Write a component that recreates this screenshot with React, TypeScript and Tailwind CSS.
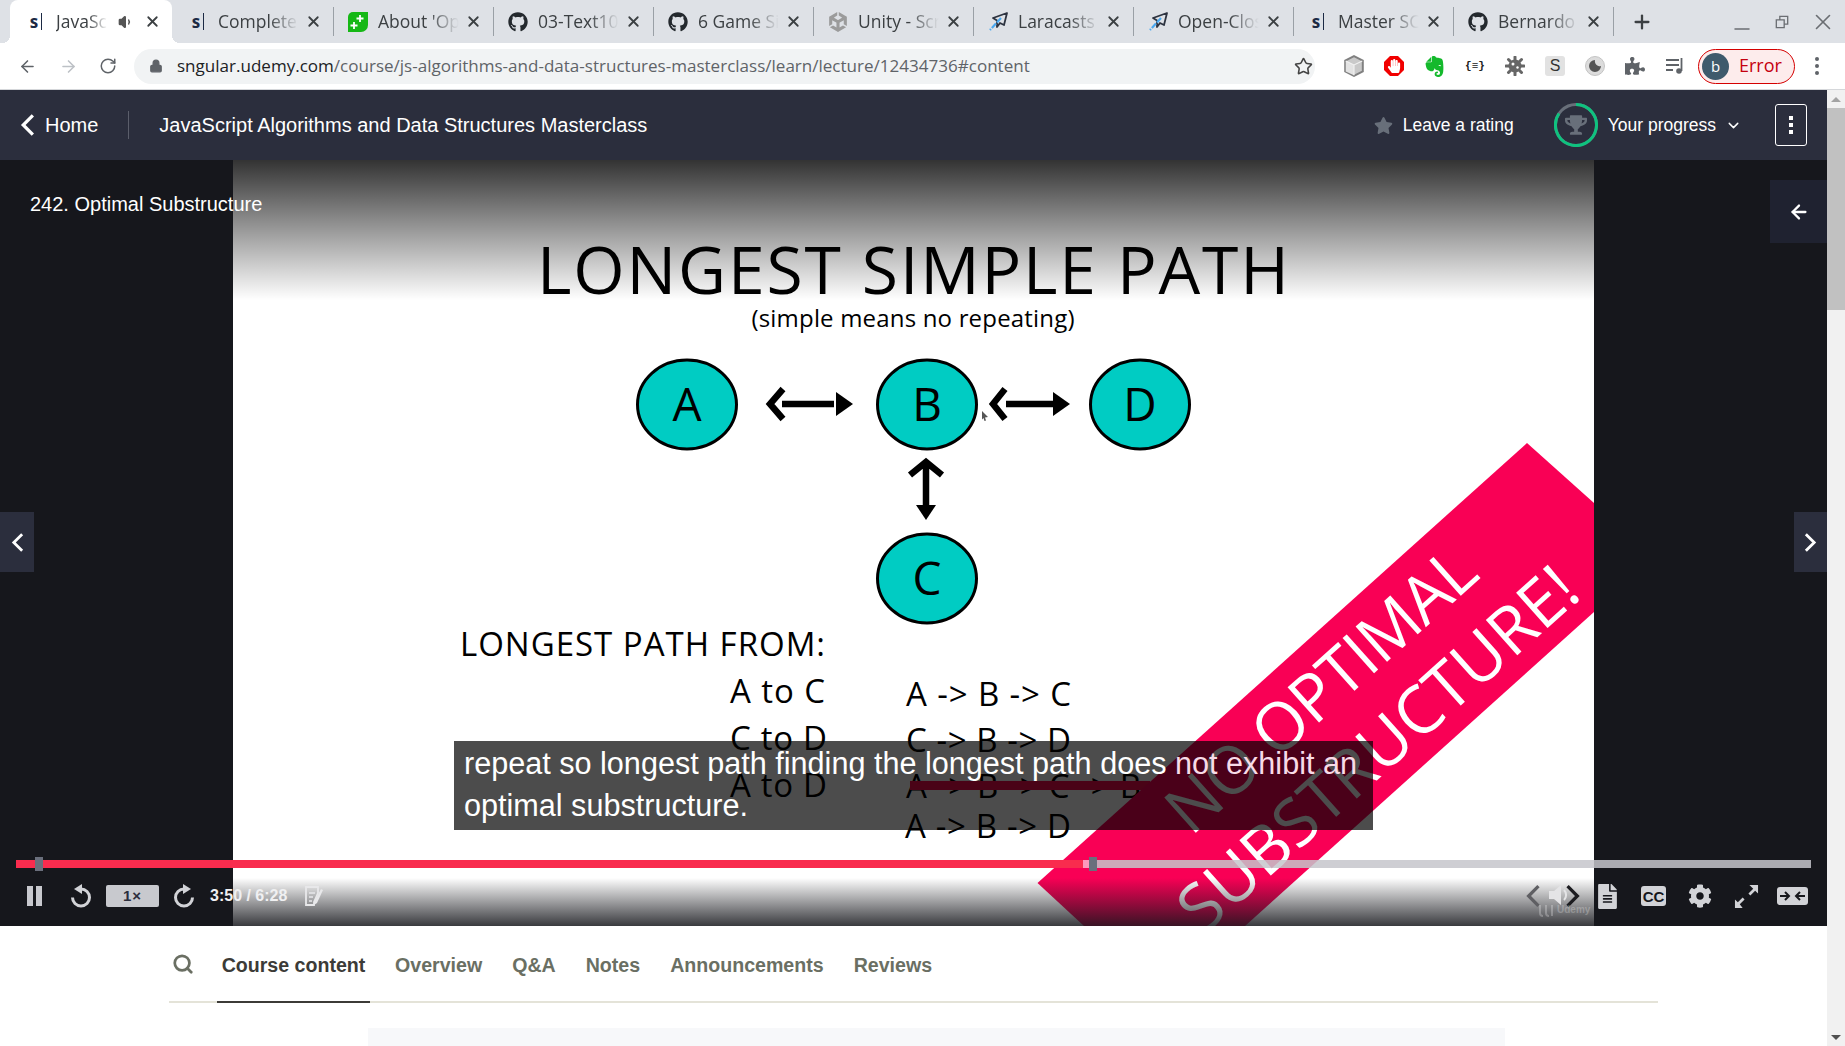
import React from 'react';
import { FaGithub, FaHandPaper, FaPuzzlePiece, FaStar, FaTrophy, FaFileAlt, FaCog } from 'react-icons/fa';
import { SiEvernote, SiUnity } from 'react-icons/si';
import { ArrowLeft, ArrowRight, ChevronDown, Lock, Minus, Plus, RotateCw, Search, Star, Volume1, X } from 'lucide-react';

type Favicon = 'udemy' | 'github' | 'plus' | 'unity' | 'plane';

const tabs: { title: string; icon: Favicon; active?: boolean }[] = [
  { title: 'JavaScript', icon: 'udemy', active: true },
  { title: 'Complete', icon: 'udemy' },
  { title: "About 'Open", icon: 'plus' },
  { title: '03-Text10', icon: 'github' },
  { title: '6 Game Sites', icon: 'github' },
  { title: 'Unity - Scr', icon: 'unity' },
  { title: 'Laracasts', icon: 'plane' },
  { title: 'Open-Clos', icon: 'plane' },
  { title: 'Master SC', icon: 'udemy' },
  { title: 'Bernardo', icon: 'github' },
];

function Chevron({ right, className }: { right?: boolean; className: string }) {
  return (
    <svg viewBox="0 0 14 22" className={className}>
      <path d={right ? 'M2 2l9 9-9 9' : 'M12 2l-9 9 9 9'} fill="none" stroke="currentColor" strokeWidth="3" />
    </svg>
  );
}

function TabIcon({ icon }: { icon: Favicon }) {
  if (icon === 'udemy') {
    return (
      <span className="flex h-5 w-5 shrink-0 items-center justify-center gap-[3px] text-[17px] font-bold text-[#1c2a44]">
        <span>s</span>
        <span className="h-[17px] w-px bg-[#1c2a44]" />
      </span>
    );
  }
  if (icon === 'github') return <FaGithub className="h-5 w-5 shrink-0 text-[#24292e]" />;
  if (icon === 'unity') return <SiUnity className="h-5 w-5 shrink-0 text-[#9b9b9b]" />;
  if (icon === 'plus') {
    return (
      <svg viewBox="0 0 20 20" className="h-5 w-5 shrink-0">
        <path d="M5 0h15v13a7 7 0 0 1-7 7H0V5a5 5 0 0 1 5-5z" fill="#16b816" />
        <path d="M12 3v7M8.500 6.500h7M6 10v7M2.500 13.500h7" stroke="#fff" strokeWidth="1.800" />
      </svg>
    );
  }
  return (
    <svg viewBox="0 0 20 20" className="h-5 w-5 shrink-0">
      <path d="M19 1L5 6l4 2.500L9 15l3-4 4 2z" fill="none" stroke="#2d3340" strokeWidth="1.800" strokeLinejoin="round" />
      <path d="M13 6L2 18" stroke="#4aa8f0" strokeWidth="2.200" strokeDasharray="6 1.500" />
    </svg>
  );
}

function TabStrip() {
  return (
    <div className="flex h-[43px] shrink-0 items-stretch bg-[#dee1e6] pl-[10px]">
      {tabs.map(tab => (
        <div
          key={tab.title}
          className={
            tab.active
              ? 'relative mr-[2px] flex w-[162px] items-center rounded-t-lg bg-white pl-[16px] pr-[10px]'
              : 'flex w-[160px] items-center pl-[14px]'
          }
        >
          {tab.active && (
            <>
              <span className="absolute bottom-0 left-[-8px] h-2 w-2 bg-[radial-gradient(circle_at_0_0,transparent_8px,white_8px)]" />
              <span className="absolute bottom-0 right-[-8px] h-2 w-2 bg-[radial-gradient(circle_at_100%_0,transparent_8px,white_8px)]" />
            </>
          )}
          <TabIcon icon={tab.icon} />
          <span className="ml-[10px] min-w-0 flex-1 overflow-hidden whitespace-nowrap text-[17.500px] text-[#3c4043] [mask-image:linear-gradient(to_right,black_60%,transparent_95%)]">
            {tab.title}
          </span>
          {tab.active && <Volume1 className="mx-[8px] h-[16px] w-[16px] shrink-0 fill-[#555] text-[#555]" />}
          <X className="mx-[1.500px] h-[17px] w-[17px] shrink-0 text-[#3c4043]" strokeWidth={2.500} />
          {!tab.active && <span className="ml-[10px] h-[29px] w-px shrink-0 bg-[#9aa0a6]" />}
        </div>
      ))}
      <div className="flex w-[56px] items-center justify-center">
        <Plus className="h-[22px] w-[22px] text-[#3c4043]" strokeWidth={2.500} />
      </div>
      <div className="flex flex-1 items-center text-[#6b6e73]">
        <Minus className="ml-[60px] mt-[14px] h-[24px] w-[24px]" strokeWidth={1.500} />
        <svg viewBox="0 0 16 16" className="ml-[21px] h-[14px] w-[14px]">
          <path d="M1.500 5.500h9v9h-9zM5.500 5.500v-4h9v9h-4" fill="none" stroke="currentColor" strokeWidth="1.500" />
        </svg>
        <X className="ml-[21px] h-[26px] w-[26px]" strokeWidth={1.500} />
      </div>
    </div>
  );
}

function ExtensionIcons() {
  return (
    <div className="ml-[29px] flex items-center gap-[20px]">
      <svg viewBox="0 0 20 20" className="h-5 w-5 scale-110">
        <path d="M10 1l8 4v10l-8 4-8-4V5z" fill="#c9c9c9" stroke="#808080" strokeWidth="1.800" />
        <path d="M2.500 5.500L10 9v9.500l-7.500-3.500z" fill="#e3e3e3" />
        <path d="M2.500 5.500L10 9l7.500-3.500M10 9v9.500" fill="none" stroke="#f2f2f2" />
      </svg>
      <span className="relative flex h-5 w-5 items-center justify-center">
        <svg viewBox="0 0 20 20" className="absolute inset-0 h-5 w-5">
          <path d="M6 0h8l6 6v8l-6 6H6l-6-6V6z" fill="#f10000" />
        </svg>
        <FaHandPaper className="relative h-[14px] w-[14px] text-white" />
      </span>
      <SiEvernote className="h-[21px] w-[21px] text-[#14b92c]" />
      <span className="w-5 text-center font-['Liberation_Mono',monospace] text-[11px] font-bold text-[#222]">{'{≡}'}</span>
      <svg viewBox="0 0 20 20" className="h-5 w-5">
        <g stroke="#666" strokeWidth="3" strokeLinecap="round">
          <path d="M10 1v18M1 10h18M3.500 3.500l13 13M16.500 3.500l-13 13" />
        </g>
        <circle cx="10" cy="10" r="6.500" fill="#666" />
        <circle cx="8" cy="8" r="1.500" fill="#fff" />
        <circle cx="12.500" cy="11.500" r="1.200" fill="#fff" />
      </svg>
      <span className="flex h-5 w-5 items-center justify-center rounded-[3px] bg-[#e2e2e2] font-['Liberation_Sans',sans-serif] text-[16px] text-[#333]">S</span>
      <svg viewBox="0 0 20 20" className="h-5 w-5">
        <circle cx="10" cy="10" r="9.500" fill="#dcdcdc" stroke="#c4c4c4" />
        <path d="M10 4a6 6 0 1 0 6 6 5 5 0 0 1-6-6z" fill="#555" />
      </svg>
      <FaPuzzlePiece className="h-5 w-5 text-[#5f6368]" />
      <svg viewBox="0 0 20 20" className="h-5 w-5">
        <path d="M1 4h13M1 9h13M1 14h7" stroke="#5f6368" strokeWidth="1.800" />
        <path d="M16.500 2v13" stroke="#5f6368" strokeWidth="1.800" />
        <circle cx="14" cy="15" r="2.800" fill="#5f6368" />
      </svg>
    </div>
  );
}

function Toolbar() {
  return (
    <div className="flex h-[47px] shrink-0 items-center border-b border-[#d5d7da] bg-white pl-[18px] text-[#5f6368]">
      <ArrowLeft className="h-[19px] w-[19px]" />
      <ArrowRight className="ml-[22px] h-[19px] w-[19px] text-[#bdc1c6]" />
      <RotateCw className="ml-[21px] h-[18px] w-[18px]" />
      <div className="relative ml-[17px] flex h-[35px] w-[1181px] items-center rounded-full bg-[#f1f3f4] pl-[43px] pr-[1px]">
        <Lock className="absolute left-[15px] h-[14px] w-[14px] fill-[#5f6368]" />
        <span className="flex-1 whitespace-nowrap text-[17.050px]">
          <span className="text-[#202124]">sngular.udemy.com</span>
          <span className="text-[#5f6368]">/course/js-algorithms-and-data-structures-masterclass/learn/lecture/12434736#content</span>
        </span>
        <Star className="mr-[1px] h-[19px] w-[19px] text-[#444]" />
      </div>
      <ExtensionIcons />
      <div className="ml-[13px] flex h-[35px] w-[97px] items-center rounded-full border border-[#d50000] bg-[#fdecec] pl-[3px]">
        <span className="flex h-[27px] w-[27px] items-center justify-center rounded-full bg-[#3f5a6c] text-[15px] text-white">b</span>
        <span className="ml-[10px] mt-[-2px] text-[18px] text-[#c5000f]">Error</span>
      </div>
      <div className="ml-[20px] flex flex-col gap-[3px]">
        <span className="h-[4px] w-[4px] rounded-full bg-[#5f6368]" />
        <span className="h-[4px] w-[4px] rounded-full bg-[#5f6368]" />
        <span className="h-[4px] w-[4px] rounded-full bg-[#5f6368]" />
      </div>
    </div>
  );
}

function CourseHeader() {
  return (
    <div className="flex h-[70px] shrink-0 items-center bg-[#2b2e3d] font-['Liberation_Sans',sans-serif] text-white">
      <Chevron className="ml-[20px] h-[24px] w-[15px]" />
      <span className="ml-[10px] pb-[1px] text-[20px]">Home</span>
      <span className="ml-[30px] h-[28px] w-px bg-[#5b5e6b]" />
      <span className="ml-[30px] pb-[1px] text-[20px]">JavaScript Algorithms and Data Structures Masterclass</span>
      <div className="ml-auto flex items-center">
        <FaStar className="h-[19px] w-[19px] text-[#686f7a]" />
        <span className="ml-[10px] text-[17.500px]">Leave a rating</span>
        <div className="relative ml-[40px] flex h-[44px] w-[44px] items-center justify-center">
          <svg viewBox="0 0 44 44" className="absolute inset-0">
            <circle cx="22" cy="22" r="20.500" fill="none" stroke="#686f7a" strokeWidth="3" />
            <path d="M22 1.500A20.500 20.500 0 1 1 5 10.500" fill="none" stroke="#0fc27f" strokeWidth="3" />
          </svg>
          <FaTrophy className="h-[22px] w-[22px] text-[#686f7a]" />
        </div>
        <span className="ml-[10px] text-[17.500px]">Your progress</span>
        <ChevronDown className="ml-[9px] h-[17px] w-[17px]" />
        <div className="ml-[33px] mr-[20px] flex h-[42px] w-[32px] flex-col items-center justify-center gap-[3px] rounded-[3px] border border-white">
          <span className="h-[4px] w-[4px] bg-white" />
          <span className="h-[4px] w-[4px] bg-white" />
          <span className="h-[4px] w-[4px] bg-white" />
        </div>
      </div>
    </div>
  );
}

function Slide() {
  const label = { fontFamily: "'Open Sans', sans-serif", fill: '#000' };
  const nodes = [
    { x: 687, y: 404.500, t: 'A' },
    { x: 927, y: 404.500, t: 'B' },
    { x: 1140, y: 404.500, t: 'D' },
    { x: 927, y: 578.500, t: 'C' },
  ];
  return (
    <svg viewBox="233 160 1361 766" className="h-[766px] w-[1361px] bg-white">
      <text x="913" y="294" textAnchor="middle" fontSize="66" textLength="752" {...label}>LONGEST SIMPLE PATH</text>
      <text x="913" y="327" textAnchor="middle" fontSize="24" textLength="323" {...label}>(simple means no repeating)</text>

      {nodes.map(n => (
        <g key={n.t}>
          <ellipse cx={n.x} cy={n.y} rx="49.500" ry="44.500" fill="#00ccc3" stroke="#000" strokeWidth="3" />
          <text x={n.x} y={n.y + 16} textAnchor="middle" fontSize="46" {...label}>{n.t}</text>
        </g>
      ))}

      <path d="M782 404h52M783 389l-13 15 13 15" fill="none" stroke="#000" strokeWidth="6.500" />
      <path d="M836 392l17 12-17 12z" fill="#000" />
      <path d="M1006 404h50M1005 389l-12 15 12 15" fill="none" stroke="#000" strokeWidth="6.500" />
      <path d="M1053 392l17 12-17 12z" fill="#000" />
      <path d="M926 466v42M910 475l16-13 16 13" fill="none" stroke="#000" strokeWidth="6.500" />
      <path d="M916 505l10 15 10-15z" fill="#000" />
      <path d="M982 411l6 6-3 .500 1 3-1.500 .500-1-3-1.500 1.500z" fill="#555" />

      <text x="460" y="656" fontSize="33" textLength="365" {...label}>LONGEST PATH FROM:</text>
      <text x="730" y="703" fontSize="33" textLength="95" {...label}>A to C</text>
      <text x="730" y="750" fontSize="33" textLength="97" {...label}>C to D</text>
      <text x="730" y="797" fontSize="33" textLength="97" {...label}>A to D</text>
      <text x="906" y="706" fontSize="33" textLength="165" {...label}>A -&gt; B -&gt; C</text>
      <text x="906" y="752" fontSize="33" textLength="165" {...label}>C -&gt; B -&gt; D</text>
      <text x="906" y="798" fontSize="33" textLength="235" {...label}>A -&gt; B -&gt; C -&gt; B</text>
      <text x="905" y="838" fontSize="33" textLength="166" {...label}>A -&gt; B -&gt; D</text>
      <rect x="910" y="781" width="240" height="9" fill="#f90b4d" />

      <polygon points="1527,443 1594,503 1594,612 1245,926 1084,926 1037.500,883" fill="#f90055" />
      <g fontFamily="'Open Sans', sans-serif" fill="#fff" fontSize="66">
        <text transform="translate(1191 837) rotate(-41.800)" textLength="390">NO OPTIMAL</text>
        <text transform="translate(1203 936) rotate(-41.800)" textLength="510">SUBSTRUCTURE!</text>
      </g>
    </svg>
  );
}

function BottomControls() {
  return (
    <div className="absolute inset-x-0 bottom-0 flex h-[60px] items-center text-[#d2d3d7]">
      <div className="ml-[27px] flex h-[20px] w-[15px] justify-between">
        <span className="w-[6px] bg-[#c8c9ce]" />
        <span className="w-[6px] bg-[#c8c9ce]" />
      </div>
      <svg viewBox="0 0 24 24" className="ml-[27px] h-[24px] w-[24px]">
        <path d="M12 5a8.500 8.500 0 1 1-8.500 8.500" fill="none" stroke="currentColor" strokeWidth="3" />
        <path d="M13 0L5 5l8 5z" fill="currentColor" />
      </svg>
      <div className="ml-[13px] flex h-[22px] w-[53px] items-center justify-center rounded-[2px] bg-[#c8c9ce] text-[15px] font-bold tracking-[1px] text-[#2b2e3d]">1×</div>
      <svg viewBox="0 0 24 24" className="ml-[13px] h-[24px] w-[24px]">
        <path d="M12 5a8.500 8.500 0 1 0 8.500 8.500" fill="none" stroke="currentColor" strokeWidth="3" />
        <path d="M11 0l8 5-8 5z" fill="currentColor" />
      </svg>
      <span className="ml-[14px] text-[16px] font-bold text-[#f0f0f2]">3:50 / 6:28</span>
      <svg viewBox="0 0 20 20" className="ml-[17px] h-[20px] w-[20px] text-[#e8e8ea]">
        <path d="M2 1h12v6l-4 9v3H2z" fill="none" stroke="currentColor" strokeWidth="1.800" />
        <path d="M5 7h6M5 11h4M5 15h3" stroke="currentColor" strokeWidth="1.500" />
        <path d="M17 3l2 1-6 13-3 2v-3z" fill="currentColor" />
      </svg>

      <div className="ml-auto flex items-center">
        <Chevron className="h-[24px] w-[16px] text-[#5f5f63]" />
        <svg viewBox="0 0 24 24" className="ml-[7px] mt-[-2px] h-[24px] w-[24px]">
          <path d="M1 8h5l7-6v20l-7-6H1z" fill="#e4e4e6" />
          <path d="M16 7a7 7 0 0 1 0 10" fill="none" stroke="#e4e4e6" strokeWidth="2" />
        </svg>
        <Chevron right className="ml-[-7px] h-[24px] w-[16px] text-[#1c1c20]" />
        <FaFileAlt className="ml-[16px] h-[25px] w-[21px]" />
        <span className="ml-[23px] flex h-[20px] w-[25px] items-center justify-center rounded-[3px] bg-[#d2d3d7] text-[15px] font-bold leading-none text-[#16171c]">CC</span>
        <FaCog className="ml-[22px] h-[24px] w-[24px]" />
        <svg viewBox="0 0 26 26" className="ml-[22px] h-[25px] w-[25px]">
          <path d="M16 1h9v9l-3-3-5 5-2-2 5-5zM1 25v-9l3 3 5-5 2 2-5 5 3 4z" fill="currentColor" />
        </svg>
        <svg viewBox="0 0 31 18" className="ml-[18px] mr-[19px] h-[18px] w-[31px]">
          <rect width="31" height="18" rx="3" fill="currentColor" />
          <path d="M3 9h9M8 5l4 4-4 4M28 9h-9M23 5l-4 4 4 4" fill="none" stroke="#16171c" strokeWidth="2" />
        </svg>
      </div>
      {/* watermark sitting in the corner of the frame */}
      <svg viewBox="0 0 18 14" className="absolute bottom-[8px] left-[1537px] h-[14px] w-[18px] text-white/25">
        <path d="M3 1v8a3 3 0 0 0 3 3M9 1v8a3 3 0 0 0 3 3M15 1v11" fill="none" stroke="currentColor" strokeWidth="2" />
      </svg>
      <span className="absolute bottom-[9px] left-[1557px] text-[10px] font-bold text-white/25">Udemy</span>
    </div>
  );
}

function VideoPlayer() {
  return (
    <div className="relative flex h-[766px] shrink-0 justify-center overflow-hidden bg-[#16171c] font-['Liberation_Sans',sans-serif]">
      <div className="relative h-[766px] w-[1361px] shrink-0">
        <Slide />
        {/* dark fades above and below the frame */}
        <div className="absolute inset-x-0 top-0 h-[140px] bg-gradient-to-b from-black/80 to-transparent" />
        <div className="absolute inset-x-0 bottom-0 h-[48px] bg-gradient-to-t from-[#16171c]/85 to-transparent" />
      </div>

      <span className="absolute left-[30px] top-[29px] text-[20px] text-white">242. Optimal Substructure</span>

      <div className="absolute right-0 top-[20px] flex h-[63px] w-[57px] items-center justify-center bg-[#1f2230] text-white">
        <ArrowLeft className="h-[22px] w-[22px]" strokeWidth={2.500} />
      </div>
      <div className="absolute left-0 top-[352px] flex h-[60px] w-[34px] items-center justify-center bg-[#2b2e3d] text-white">
        <Chevron className="h-[21px] w-[13px]" />
      </div>
      <div className="absolute right-0 top-[352px] flex h-[60px] w-[33px] items-center justify-center bg-[#2b2e3d] text-white">
        <Chevron right className="h-[21px] w-[13px]" />
      </div>

      <div className="absolute left-[454px] top-[581px] h-[89px] w-[919px] bg-black/70 px-[10px] pt-[1px] text-[30.600px] leading-[42px] text-white">
        repeat so longest path finding the longest path does <span className="text-[#f8dbe7]">not exhibit an</span> optimal substructure.
      </div>

      <div className="absolute left-[16px] right-[16px] top-[700px] flex h-[8px]">
        <div className="w-[1067px] bg-[#f92c4e]" />
        <div className="w-[6px] bg-white/60" />
        <div className="flex-1 bg-[#c5c6cb]/85" />
      </div>
      <span className="absolute left-[35px] top-[697px] h-[14px] w-[8px] bg-[#6a6f7c]" />
      <span className="absolute left-[1089px] top-[697px] h-[14px] w-[8px] bg-[#6a6f7c]" />

      <BottomControls />
    </div>
  );
}

function CourseTabs() {
  const items = ['Overview', 'Q&A', 'Notes', 'Announcements', 'Reviews'];
  return (
    <div className="mx-[169px] flex h-[77px] shrink-0 items-stretch border-b-2 border-[#e4e3d8] font-['Liberation_Sans',sans-serif] text-[19.600px] font-bold text-[#6a6f63]">
      <div className="flex w-[48px] items-center pl-[3px]">
        <Search className="h-[22px] w-[22px]" strokeWidth={3} />
      </div>
      <div className="mb-[-2px] flex w-[153px] items-center justify-center border-b-[2px] border-[#3c3b37] pt-[4px] text-[#3c3b37]">
        Course content
      </div>
      <div className="ml-[25px] flex items-center gap-[30px] pt-[4px]">
        {items.map(item => (
          <span key={item}>{item}</span>
        ))}
      </div>
    </div>
  );
}

function Scrollbar() {
  return (
    <div className="flex w-[18px] shrink-0 flex-col items-center bg-[#f1f1f1]">
      <span className="mt-[7px] h-0 w-0 border-x-[5px] border-b-[5px] border-x-transparent border-b-[#a3a3a3]" />
      <div className="mt-[6px] h-[202px] w-full bg-[#c1c1c1]" />
      <span className="mb-[6px] mt-auto h-0 w-0 border-x-[5px] border-t-[5px] border-x-transparent border-t-[#505050]" />
    </div>
  );
}

export default function App() {
  return (
    <div className="flex h-[1046px] w-[1845px] flex-col overflow-hidden bg-white font-['Open_Sans',sans-serif]">
      <TabStrip />
      <Toolbar />
      <div className="flex min-h-0 flex-1">
        <div className="flex min-w-0 flex-1 flex-col">
          <CourseHeader />
          <VideoPlayer />
          <CourseTabs />
          <div className="ml-[368px] mt-[25px] h-[18px] w-[1137px] bg-[#f7f8fa]" />
        </div>
        <Scrollbar />
      </div>
    </div>
  );
}
